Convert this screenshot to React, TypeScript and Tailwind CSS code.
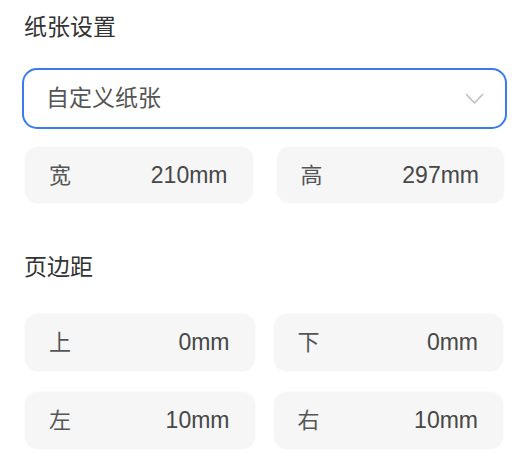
const font = { fontFamily: '"Liberation Sans", "Noto Sans CJK SC", sans-serif' };

function Field({ label, value }: { label: string; value: string }) {
  return (
    <div className="h-full flex items-center justify-between pl-[24px] pr-[25px] rounded-[14px] bg-[#f6f6f6] border border-[#fbfbfb]">
      <span className="text-[22px] text-[#555]">{label}</span>
      <span className="text-[23px] text-[#474747]">{value}</span>
    </div>
  );
}

export default function App() {
  return (
    <div
      className="w-[524px] h-[462px] bg-white pt-[12px] px-[22px] flex flex-col"
      style={font}
    >
      <h2 className="h-[30px] leading-[30px] text-[23px] text-[#333] pl-[2px]">纸张设置</h2>

      <button className="mt-[26px] h-[61px] w-[485px] flex items-center justify-between rounded-[15px] border-2 border-[#3a7cf0] pl-[22px] pr-[21px] bg-white">
        <span className="text-[23px] text-[#555]">自定义纸张</span>
        <svg width="19" height="11" viewBox="0 0 19 11" fill="none">
          <path d="M1 1 L9.5 10 L18 1" stroke="#bdbdbd" strokeWidth="1.5" />
        </svg>
      </button>

      <div className="mt-[17px] h-[58px] ml-[2px] w-[481px] grid grid-cols-2 gap-[22px]">
        <Field label="宽" value="210mm" />
        <Field label="高" value="297mm" />
      </div>

      <h2 className="mt-[48px] h-[30px] leading-[30px] text-[23px] text-[#333] pl-[2px]">页边距</h2>

      <div className="mt-[31px] ml-[2px] w-[480px] grid grid-cols-2 gap-x-[17px] gap-y-[19px]">
        <div className="h-[59px]"><Field label="上" value="0mm" /></div>
        <div className="h-[59px]"><Field label="下" value="0mm" /></div>
        <div className="h-[59px]"><Field label="左" value="10mm" /></div>
        <div className="h-[59px]"><Field label="右" value="10mm" /></div>
      </div>
    </div>
  );
}
